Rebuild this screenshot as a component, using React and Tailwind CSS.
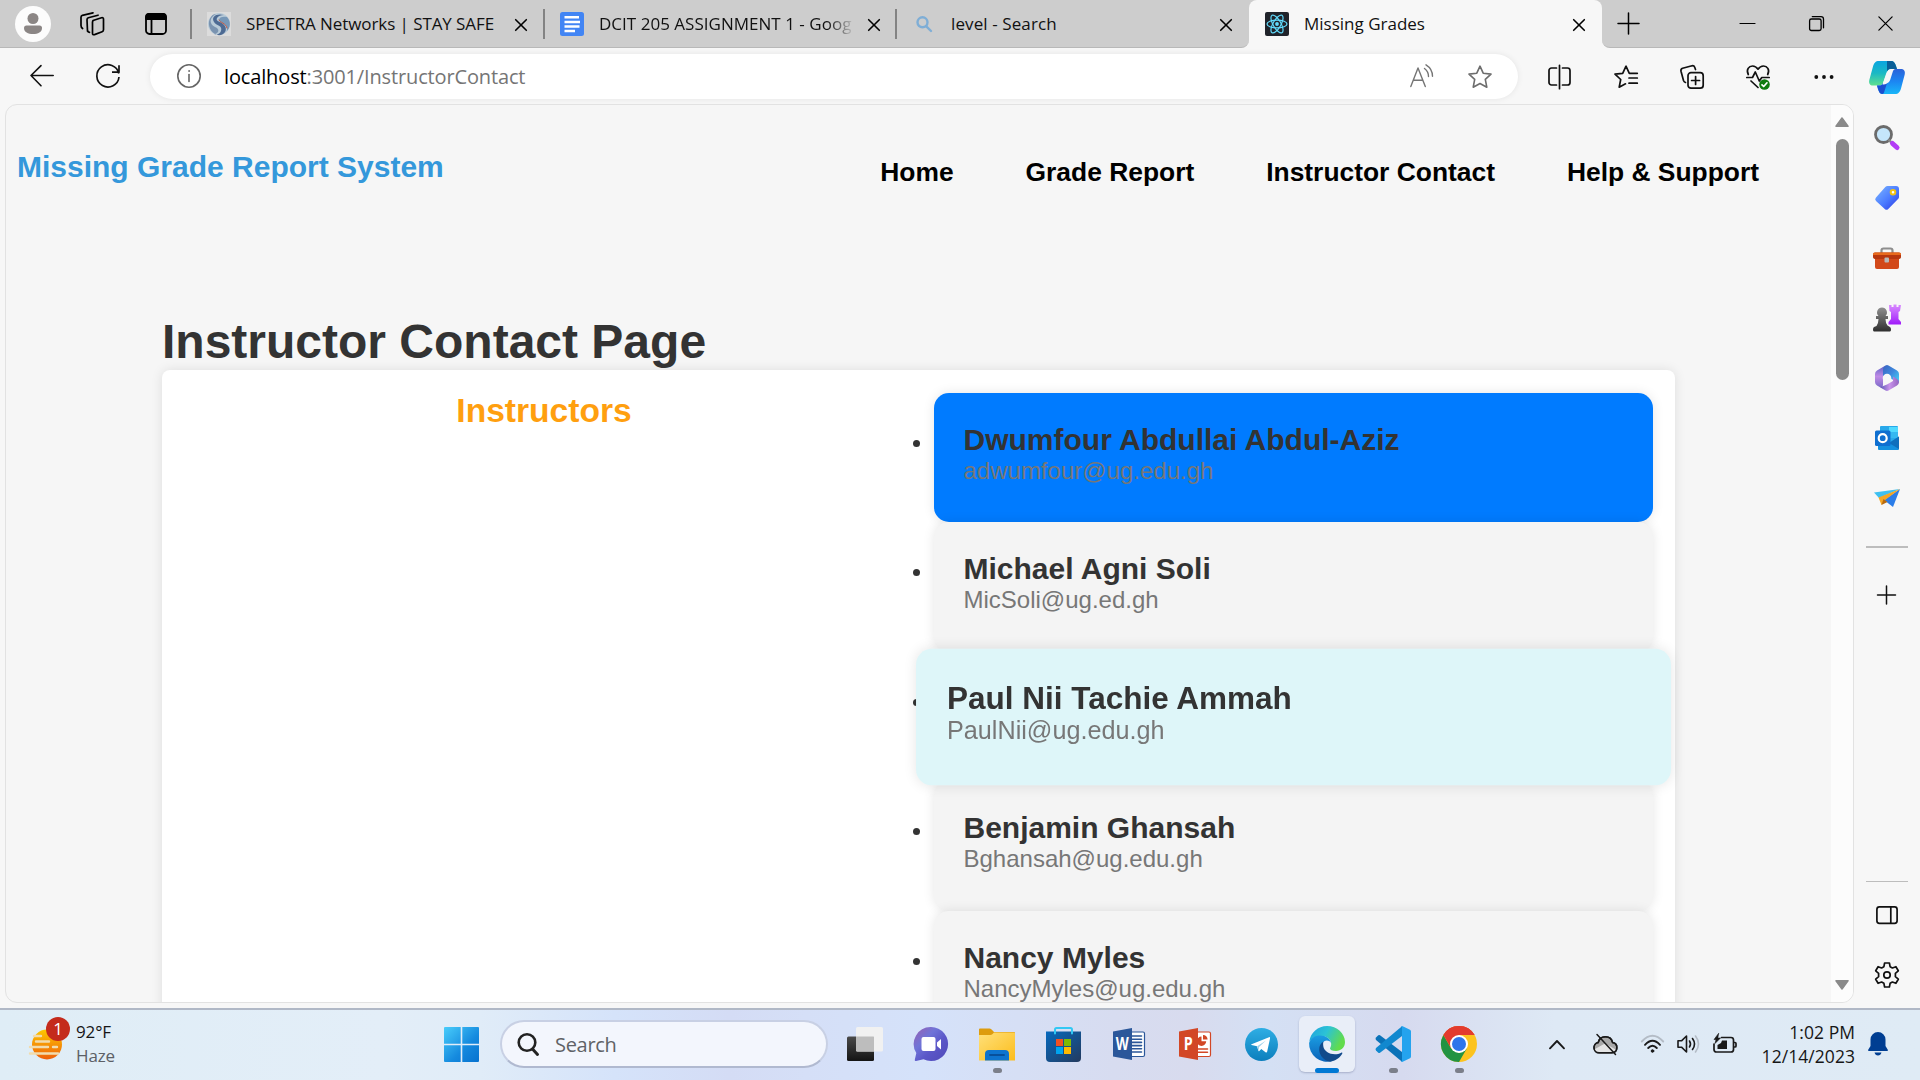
import React from "react";

const segoe = "font-['Open_Sans','Noto_Sans',sans-serif]";
const arial = "font-['Liberation_Sans',Arial,sans-serif]";

function Svg({ w = 24, h = 24, vb, className = "", children, sw = 1.5 }) {
  return (
    <svg
      width={w}
      height={h}
      viewBox={vb || `0 0 ${w} ${h}`}
      fill="none"
      stroke="currentColor"
      strokeWidth={sw}
      strokeLinecap="round"
      strokeLinejoin="round"
      className={"block shrink-0 overflow-visible " + className}
    >
      {children}
    </svg>
  );
}

/* ---------- tab strip ---------- */

function Cross({ size = 12, sw = 1.6, className = "" }) {
  return (
    <Svg w={size} h={size} vb="0 0 12 12" sw={sw} className={className}>
      <path d="M0.7 0.7 11.3 11.3M11.3 0.7 0.7 11.3" />
    </Svg>
  );
}

function SpectraIcon() {
  return (
    <Svg sw={0}>
      <rect width="24" height="24" fill="#dcdcdc" />
      <circle cx="12" cy="12" r="11" fill="#b9cbd8" />
      <path d="M17 3C9 1 4 5 7 10c2 4 9 3 7 9-1 3-4 4-7 3 9 4 14-3 11-8C15 9 8 10 10 6c1-2 4-3 7-3z" fill="#4d6a93" />
      <path d="M9 2C2 6 2 12 8 15c5 2 4 6 0 7-6-3-8-12-4-17 1-2 3-3 5-3z" fill="#7a93b0" />
      <path d="M20 5c-4-1-8 0-8 3 0 3 8 3 8 9 0 1 0 2-1 3 5-4 5-11 1-15z" fill="#7798b8" />
      <path d="M12 8c1 3 7 3 8 8" stroke="#c9583f" strokeWidth="1" />
    </Svg>
  );
}

function DocsIcon() {
  return (
    <Svg sw={0}>
      <rect width="24" height="24" rx="2.5" fill="#4285f4" />
      <path d="M4.5 4h14.500v2.500h-14.500zM4.500 8.700h15.500v2.500h-15.500zM4.500 13.300h15v2.500h-15zM4.500 17.700h10.500v2.500h-10.500z" fill="#fff" />
    </Svg>
  );
}

function ReactIcon() {
  return (
    <Svg sw={1.2}>
      <rect width="24" height="24" rx="2" fill="#20232a" stroke="none" />
      <g stroke="#61dafb">
        <ellipse cx="12" cy="12" rx="10" ry="3.900" />
        <ellipse cx="12" cy="12" rx="10" ry="3.900" transform="rotate(60 12 12)" />
        <ellipse cx="12" cy="12" rx="10" ry="3.900" transform="rotate(120 12 12)" />
      </g>
      <circle cx="12" cy="12" r="1.900" fill="#61dafb" stroke="none" />
    </Svg>
  );
}

function Tab({ icon, title, className, titleClass = "" }) {
  return (
    <div className={"flex h-full items-center " + className}>
      {icon}
      <span className={"min-w-0 flex-1 overflow-hidden text-[17px] leading-6 whitespace-nowrap text-[#111] " + titleClass}>
        {title}
      </span>
      <Cross className="mt-[2px]" />
    </div>
  );
}

const Divider = () => <div className="h-[30px] w-[2px] shrink-0 bg-[#838383]" />;

function TabStrip() {
  return (
    <div className={"flex h-12 shrink-0 bg-[#f7f7f7] text-black " + segoe}>
      <div className="flex w-[1249px] items-center rounded-br-lg border-b border-[#b8b8b8] bg-[#cdcdcd] pl-[15px]">
        <Svg w={36} h={36} sw={0}>
          <circle cx="18" cy="18" r="18" fill="#fcfcfc" />
          <circle cx="18" cy="12.500" r="5.500" fill="#8b8685" />
          <path d="M11.500 19.500h13a2.500 2.500 0 0 1 2.500 2.500c0 4-4 6-9 6s-9-2-9-6a2.500 2.500 0 0 1 2.500-2.500z" fill="#8b8685" />
        </Svg>
        <Svg w={25} h={24} sw={1.7} className="ml-[29px]">
          <path d="M13 8.500 21.500 5.800q2-.5 2 1.500v10.500q0 1.500-1.400 2L14.500 22.600q-2 .6-2-1.400V10q0-1.200 1-1.500z" />
          <path d="M7.500 19.300 7 7.700q0-1.500 1.300-2L18 3.200M9.500 20.300q-2-.2-2-2.300" />
          <path d="M2.600 16.500Q1 15.500 1 13.500V5.200Q1 3.800 2.400 3.300L13 .8" />
        </Svg>
        <Svg w={22} h={22} sw={1.8} className="ml-10">
          <rect x="1" y="1" width="20" height="20" rx="3.500" />
          <path d="M1 6V4a3 3 0 0 1 3-3h14a3 3 0 0 1 3 3v2z" fill="currentColor" />
          <path d="M6.500 6v15" />
        </Svg>
        <div className="ml-[23px]"><Divider /></div>
        <Tab className="w-[351px] pr-4 pl-[15px]" icon={<SpectraIcon />} title="SPECTRA Networks | STAY SAFE" titleClass="ml-[15px] tracking-[-0.08px]" />
        <Divider />
        <Tab
          className="w-[350px] pr-[15px] pl-[15px]"
          icon={<DocsIcon />}
          title="DCIT 205 ASSIGNMENT 1 - Goog"
          titleClass="ml-[15px] mr-[11px] tracking-[0.02px] [mask-image:linear-gradient(to_right,black_228px,transparent_256px)]"
        />
        <Divider />
        <Tab
          className="w-[351px] pr-4 pl-[19px]"
          icon={
            <Svg w={16} h={16} sw={2.4} className="text-[#7faed6]">
              <circle cx="6.500" cy="6.300" r="5" />
              <path d="m10.300 10.300 4.700 4.700" />
            </Svg>
          }
          title="level - Search"
          titleClass="ml-[19px] tracking-[0.1px]"
        />
      </div>
      <div className="w-[353px] bg-[#cdcdcd]">
        <Tab className="rounded-t-lg bg-[#f7f7f7] pr-[17px] pl-4" icon={<ReactIcon />} title="Missing Grades" titleClass="ml-[15px]" />
      </div>
      <div className="flex flex-1 items-center rounded-bl-lg border-b border-[#b8b8b8] bg-[#cdcdcd] pl-4">
        <Svg w={21} h={21}>
          <path d="M10.500 0v21M0 10.500h21" />
        </Svg>
        <Svg w={15} h={15} sw={1.2} className="ml-[101px]">
          <path d="M0 7.500h15" />
        </Svg>
        <Svg w={15} h={15} sw={1.3} className="ml-[54px]">
          <rect x=".6" y="3" width="11.500" height="11.500" rx="1.800" />
          <path d="M3.300 .6h8.700a2.500 2.500 0 0 1 2.500 2.500v8.700" />
        </Svg>
        <Cross size={15} sw={1} className="ml-[54px]" />
      </div>
    </div>
  );
}

/* ---------- toolbar ---------- */

function CopilotIcon() {
  return (
    <Svg w={36} h={33} sw={0}>
      <defs>
        <linearGradient id="cpA" x1="0" y1="0" x2="0" y2="1">
          <stop offset="0" stopColor="#0aa5e0" />
          <stop offset=".5" stopColor="#1bb9c4" />
          <stop offset="1" stopColor="#5fe08f" />
        </linearGradient>
        <linearGradient id="cpB" x1="0" y1="0" x2="0" y2="1">
          <stop offset="0" stopColor="#2b62d9" />
          <stop offset=".5" stopColor="#1c86f2" />
          <stop offset="1" stopColor="#19b6f8" />
        </linearGradient>
      </defs>
      <path d="M10 0h12c3 0 4 2 5 5l1 3h-6c-3 0-4 2-5 5l-3 9c-.7 2-2 2.500-4 2.500H4c-3 0-4.500-2-3.700-5.500L4 5.500C5 2 6.500 0 10 0z" fill="url(#cpA)" />
      <path d="M18 0h4c3 0 4 2 5 5l1 3h-6c-2 0-3 .6-4 2.500z" fill="#0a5f98" />
      <path d="M26 33H14c-3 0-4-2-5-5l-1-3.500h2c2 0 3.300-.5 4-2.500h3c2.500 0 3.500-1 4.300-3.500L24 10c.7-1.800 2-2 4-2h3.500c3.500 0 5 2 4.200 5.500L32 27.500c-1 3.500-2.500 5.500-6 5.500z" fill="url(#cpB)" />
      <path d="M8 24.500h2c2 0 3.300-.5 4-2.500h4l-2.500 8c-.5 1.800-1 3-2 3-2.600 0-3.500-2-4.500-5z" fill="#1b4fd0" />
      <path d="m17.500 13-4 10.500c4 0 5.500-1.500 6.300-4L22.800 9c-3.200-.4-4.400 1.300-5.300 4z" fill="#f7f7f7" />
    </Svg>
  );
}

function Toolbar() {
  return (
    <div className={"flex h-14 shrink-0 items-center bg-[#f7f7f7] pl-[30px] text-[#111] " + segoe}>
      <Svg w={24} h={22} sw={1.600}>
        <path d="M23.200 10.500H1M11 .6 1 10.500 11 20.800" />
      </Svg>
      <Svg sw={1.700} className="ml-[42px]">
        <path d="M22.800 9.500A11.100 11.100 0 1 0 23 13M23 1.200v7h-7" strokeLinecap="butt" />
      </Svg>
      <div className="ml-[30px] flex h-[45px] w-[1368px] items-center rounded-full bg-white pr-[26px] pl-[27px] shadow-[0_0_6px_rgba(0,0,0,0.08)]">
        <Svg className="text-[#666]" sw={1.600}>
          <circle cx="12" cy="12" r="11.200" />
          <path d="M12 10.500v7" />
          <circle cx="12" cy="7" r=".5" fill="currentColor" strokeWidth=".8" />
        </Svg>
        <span className="ml-[23px] flex-1 pt-[2px] text-[20px] leading-6 tracking-[-0.14px] text-[#757575]">
          <span className="text-black">localhost</span>:3001/InstructorContact
        </span>
        <Svg className="text-[#757575]" sw={1.400}>
          <path d="M.8 22.500 8 4l7.300 18.500M3.300 16.300h9.500M14.500 4.500q4 3 4 8M16 .8q6.500 4 6.500 11.500" />
        </Svg>
        <Svg className="mt-px ml-[34px] text-[#6d6d6d]" sw={1.600}>
          <path d="m12 1.200 3.200 7 7.800.9-5.700 5.300 1.500 7.800L12 18.500l-6.800 3.700 1.500-7.800L1 9.100l7.800-.9z" />
        </Svg>
      </div>
      <Svg className="mt-px ml-[30px]" sw={1.700}>
        <path d="M11.500 .3v23.400M8.500 3H3.500A2.500 2.500 0 0 0 1 5.500v12A2.500 2.500 0 0 0 3.500 20h5M14.500 3H19.500a2.500 2.500 0 0 1 2.500 2.500v12a2.500 2.500 0 0 1-2.500 2.500h-5" />
      </Svg>
      <Svg className="mt-px ml-[42px]" sw={1.700}>
        <path d="M16 8.300h-.7L12 1.200 8.700 8.300 1 9.200l5.700 5.300-1.500 7.700 6.300-3.400M16 8.300h7.300M15 13h8.300M15 18.200h8.300" />
      </Svg>
      <Svg className="mt-px ml-[42px]" sw={1.700}>
        <rect x="8" y="7.700" width="15.200" height="15.500" rx="3" />
        <path d="M15.600 11.500v8M11.600 15.500h8M5.500 17.500q-1.500-.5-2-2L1 6.300Q.5 4 2.600 3.300L12 .8q2-.4 2.700 1.500l.8 2.200" />
      </Svg>
      <Svg className="mt-px ml-[42px]" sw={1.700}>
        <path d="M2.300 9.500C-.2 4.500 3 1 6.500 1 9 1 10.700 2.300 12 4.200 13.300 2.300 15 1 17.500 1 21 1 24.200 4.500 21.700 9.500M.8 12.500h5.700L9.300 7l4 9 2.500-3.500h7.400M5 16l7 6.500" />
        <circle cx="18.500" cy="19.500" r="5.300" fill="#107c10" stroke="none" />
        <path d="m16 19.800 1.700 1.700 3.300-3.700" stroke="#fff" />
      </Svg>
      <Svg className="mt-px ml-[42px]" sw={0}>
        <g fill="#111">
          <circle cx="4.300" cy="12" r="1.900" />
          <circle cx="12" cy="12" r="1.900" />
          <circle cx="19.600" cy="12" r="1.900" />
        </g>
      </Svg>
      <div className="mt-[2px] ml-[33px]"><CopilotIcon /></div>
    </div>
  );
}

/* ---------- web page ---------- */

const instructors = [
  { name: "Dwumfour Abdullai Abdul-Aziz", email: "adwumfour@ug.edu.gh", look: "bg-[#007bff]" },
  { name: "Michael Agni Soli", email: "MicSoli@ug.ed.gh", look: "bg-[#f4f4f4]" },
  { name: "Paul Nii Tachie Ammah", email: "PaulNii@ug.edu.gh", look: "z-10 scale-105 bg-[#def6f9]" },
  { name: "Benjamin Ghansah", email: "Bghansah@ug.edu.gh", look: "bg-[#f4f4f4]" },
  { name: "Nancy Myles", email: "NancyMyles@ug.edu.gh", look: "bg-[#f4f4f4]" },
];

function WebPage() {
  return (
    <div className={"min-w-0 flex-1 overflow-hidden " + arial}>
      <div className="flex h-[188px] items-start justify-between pr-[72px] pl-[11px] font-bold">
        <div className="mt-[45px] text-[30px] leading-[34px] text-[#3498db]">Missing Grade Report System</div>
        <nav className="mt-[52px] flex gap-[72px] text-[26.400px] leading-[30px] text-black">
          <span>Home</span>
          <span>Grade Report</span>
          <span>Instructor Contact</span>
          <span>Help &amp; Support</span>
        </nav>
      </div>
      <h1 className="mt-[21px] ml-[156px] h-14 text-[48px] leading-[55px] font-bold text-[#333]">Instructor Contact Page</h1>
      <div className="ml-[156px] flex h-[900px] w-[1513px] items-start rounded-lg bg-white pt-[22.800px] shadow-[0_0_12px_rgba(0,0,0,0.1)]">
        <h2 className="w-[764px] text-center text-[33.600px] leading-9 font-bold text-[#ff9f0f]">Instructors</h2>
        <ul className="ml-2 w-[719px]">
          {instructors.map((p) => (
            <li key={p.name} className="relative">
              <span className="absolute top-[47px] -left-[21px] size-[7px] rounded-full bg-[#333]" />
              <div className={"relative h-[129.500px] rounded-[15px] px-[29.500px] pt-[30px] shadow-[0_0_12px_rgba(0,0,0,0.1)] " + p.look}>
                <h3 className="text-[30px] leading-[34px] font-bold text-[#333]">{p.name}</h3>
                <p className="text-[24px] leading-7 text-[#777]">{p.email}</p>
              </div>
            </li>
          ))}
        </ul>
      </div>
    </div>
  );
}

function ScrollBar() {
  return (
    <div className="flex w-[22px] shrink-0 flex-col items-center bg-[#fcfcfc] pt-3 pb-3">
      <Svg w={14} h={10} sw={1.500} className="text-[#8a8a8a]">
        <path d="M7 1 13 9.300H1z" fill="currentColor" />
      </Svg>
      <div className="mt-3 h-[241px] w-[13px] rounded-full bg-[#8a8a8a]" />
      <Svg w={14} h={10} sw={1.500} className="mt-auto text-[#8a8a8a]">
        <path d="M7 9 13 .7H1z" fill="currentColor" />
      </Svg>
    </div>
  );
}

/* ---------- edge sidebar ---------- */

function SideIcons() {
  return [
    <Svg w={26} h={26} sw={0} key="search">
      <circle cx="9.500" cy="9.500" r="8" fill="#c5e6fb" stroke="#6b6b6b" strokeWidth="2.800" />
      <path d="M15.300 15.300 18 18" stroke="#8a8a8a" strokeWidth="2.500" />
      <path d="m18.500 18.500 4.500 4" stroke="#b23cf5" strokeWidth="5" />
    </Svg>,
    <Svg w={24} h={24} sw={0} key="tag">
      <defs>
        <linearGradient id="tg" x1="0" y1="0" x2="1" y2="1">
          <stop offset="0" stopColor="#7db8ff" />
          <stop offset=".55" stopColor="#4b7bff" />
          <stop offset="1" stopColor="#2a35e0" />
        </linearGradient>
      </defs>
      <path d="M12.500 0H21a3 3 0 0 1 3 3v8q0 1-.7 1.800L13 23.200q-1.500 1.300-3 0L1 15q-1.700-1.800 0-3.600L10.300 1q1-1 2.200-1z" fill="url(#tg)" />
      <circle cx="18" cy="6.300" r="2.300" fill="#fff" stroke="#f5c211" strokeWidth="2" />
    </Svg>,
    <Svg w={28} h={22} sw={0} key="case">
      <path d="M8.500 6V3.500q0-2 2-2h7q2 0 2 2V6" stroke="#8e8e8e" strokeWidth="2.200" />
      <rect x="2" y="8" width="24" height="14" rx="2" fill="#d2491a" />
      <path d="M2 5.500h24q2 0 2 2V10q0 2-3 2H3q-3 0-3-2V7.500q0-2 2-2z" fill="#b7370f" />
      <path d="M2 5.500h24q2 0 2 2V8H0v-.5q0-2 2-2z" fill="#e86a1c" />
      <rect x="11.500" y="10.500" width="4.500" height="5" rx="1" fill="#b8b8b8" />
    </Svg>,
    <Svg w={28} h={28} sw={0} key="chess">
      <defs>
        <linearGradient id="pw" x1="0" y1="0" x2="0" y2="1">
          <stop offset="0" stopColor="#8f8f8f" />
          <stop offset="1" stopColor="#2e2e2e" />
        </linearGradient>
        <linearGradient id="rk" x1="0" y1="0" x2="0" y2="1">
          <stop offset="0" stopColor="#d98cff" />
          <stop offset="1" stopColor="#a01bfa" />
        </linearGradient>
      </defs>
      <path d="M16 1h2.500v2h2V.5h3V3h2V1H28l-1 6-1.500 1v7l2.500 3v2.500H15.500V18l2.500-3V8l-1.500-1z" fill="url(#rk)" />
      <path d="M9 3.500a5 5 0 0 1 3.500 8.500H15v3h-2.500q0 4 2 6.500l2.500 1.500q1 .5 1 2.500 0 2-1 2H1q-1 0-1-2t1-2.500L3.500 22q2-3 2-7H3v-3h2.500A5 5 0 0 1 9 3.500z" fill="url(#pw)" />
    </Svg>,
    <Svg w={24} h={26} sw={0} key="m365">
      <defs>
        <linearGradient id="m3a" x1="0" y1="0" x2="0" y2="1">
          <stop offset="0" stopColor="#5b62c4" />
          <stop offset=".5" stopColor="#c08be6" />
          <stop offset="1" stopColor="#7c6bc8" />
        </linearGradient>
        <linearGradient id="m3b" x1="0" y1="0" x2="1" y2="1">
          <stop offset="0" stopColor="#3b63c0" />
          <stop offset=".5" stopColor="#3e8ade" />
          <stop offset="1" stopColor="#45d6f6" />
        </linearGradient>
        <linearGradient id="m3c" x1="0" y1="0" x2="1" y2="0">
          <stop offset="0" stopColor="#5a56b4" />
          <stop offset=".5" stopColor="#c893ea" />
          <stop offset="1" stopColor="#9463c0" />
        </linearGradient>
      </defs>
      <path d="M10.500.5 2 5.500Q0 6.700 0 9v8q0 2.300 2 3.500l3 1.700q3 .8 3-2.200V7z" fill="url(#m3a)" />
      <path d="M10.500.5q1.500-.9 3 0l8.500 5q2 1.200 2 3.500v9L16.500 14 13 9 8 11.500V5.500Q8 2 10.500.5z" fill="url(#m3b)" />
      <path d="M5 22.200l5.500 3.300q1.500.8 3 0l8.500-5q2-1.200 2-3.500 0-2-2-3l-4-2.500v4.500L12 19.500z" fill="url(#m3c)" />
      <circle cx="12" cy="13" r="4.300" fill="#f7f7f7" />
    </Svg>,
    <Svg w={24} h={24} sw={0} key="outlook">
      <rect x="5" width="18" height="16" rx="1" fill="#28a8ea" />
      <path d="M14 1h9v5h-9z" fill="#50d9ff" />
      <path d="M14 6h9v6h-9z" fill="#35b8f1" />
      <path d="M3 12 14 17 24 10.500V23q0 1-1 1H4q-1 0-1-1z" fill="#1490df" />
      <path d="M24 10.500 14 17l10 6z" fill="#0f6fbd" />
      <rect y="4.500" width="15.500" height="15.500" rx="1.500" fill="#0f6fd0" />
      <circle cx="7.700" cy="12.200" r="4" stroke="#fff" strokeWidth="2.200" />
    </Svg>,
    <Svg w={26} h={18} sw={0} key="plane">
      <path d="M0 3.500 26 0 5 9z" fill="#3fc0f0" />
      <path d="M26 0 10 11l9 7z" fill="#2b7de9" />
      <path d="M26 0 4.500 8.500 7.500 16 11 11z" fill="#f5a623" />
      <path d="M7.500 16 9.500 10l4 3z" fill="#b86b10" />
    </Svg>,
  ];
}

function SideBar() {
  return (
    <div className="flex w-[66px] shrink-0 flex-col items-center pt-1 text-[#111]">
      {SideIcons().map((icon) => (
        <div key={icon.key} className="flex h-[60px] items-center justify-center">{icon}</div>
      ))}
      <div className="mt-[18px] h-[2px] w-[42px] bg-[#bdbdbd]" />
      <Svg w={18} h={18} className="mt-[38px]">
        <path d="M8.500 0v18M-.5 9h18" />
      </Svg>
      <div className="mt-auto h-px w-[42px] bg-[#bdbdbd]" />
      <Svg w={22} h={18} sw={1.700} className="mt-6">
        <rect x=".9" y=".9" width="20.200" height="16.400" rx="2.500" />
        <path d="M14.800 1v16" />
      </Svg>
      <Svg w={24} h={26} sw={1.700} className="mt-[38px] mb-5">
        <path d="M9.600 1h4.800l.7 3.700 2.300 1.300 3.500-1.300 2.400 4.100-2.900 2.500v3.400l2.900 2.500-2.400 4.100-3.500-1.300-2.300 1.300-.7 3.700H9.600l-.7-3.700L6.600 20l-3.500 1.300L.7 17.200l2.900-2.500v-3.400L.7 8.800l2.400-4.100L6.600 6l2.300-1.300z" />
        <circle cx="12" cy="13" r="3.200" />
      </Svg>
    </div>
  );
}

/* ---------- taskbar ---------- */

function WeatherIcon() {
  return (
    <div className="relative h-[31px] w-[33px] shrink-0">
      <Svg w={33} h={31} sw={0}>
        <defs>
          <linearGradient id="sun" x1="0" y1="0" x2="0" y2="1">
            <stop offset="0" stopColor="#fdc800" />
            <stop offset="1" stopColor="#ee5f0a" />
          </linearGradient>
        </defs>
        <circle cx="18" cy="15.500" r="15" fill="url(#sun)" />
        <g stroke="#f1dcae" strokeWidth="2.400">
          <path d="M5 7h7M7 12.500h13M1 18h18M24 18h4M1 24.500h28" />
        </g>
      </Svg>
      <span className="absolute -top-[12px] left-[17px] flex size-6 items-center justify-center rounded-full bg-[#c42b1c] text-[17px] leading-none text-white">1</span>
    </div>
  );
}

function OfficeIcon({ letter, color, dark, children }) {
  return (
    <Svg w={32} h={32} sw={0}>
      <rect x="16" y="4" width="15.500" height="24.500" rx="1.500" fill="#fff" stroke={color} strokeWidth="1.200" />
      {children}
      <path d="M0 3.500 19 0v32L0 28.500z" fill={dark} />
      <text x="9.300" y="22.300" textAnchor="middle" fontSize="17" fontWeight="700" fill="#fff" fontFamily="Open Sans" textLength={letter === "W" ? 13 : 9} lengthAdjust="spacingAndGlyphs">{letter}</text>
    </Svg>
  );
}

const apps = [
  {
    id: "taskview",
    icon: (
      <Svg w={36} h={34} sw={0}>
        <defs>
          <linearGradient id="tvd" x1="0" y1="0" x2="0" y2="1"><stop offset="0" stopColor="#4a4a4a" /><stop offset="1" stopColor="#141414" /></linearGradient>
        </defs>
        <rect y="9.500" width="27" height="24.500" rx="1.500" fill="url(#tvd)" />
        <rect x="9" y="0" width="27" height="24.500" rx="1.500" fill="#f1f1f1" />
        <path d="M9 9.500h17.500a.5.500 0 0 1 .5.500v14.500H10.500A1.500 1.500 0 0 1 9 23z" fill="#bdbdbd" />
      </Svg>
    ),
  },
  {
    id: "chat",
    icon: (
      <Svg w={34} h={34} sw={0}>
        <defs>
          <linearGradient id="ch" x1="0" y1="0" x2="1" y2="1"><stop offset="0" stopColor="#9a5fb0" /><stop offset=".35" stopColor="#6f74d8" /><stop offset=".6" stopColor="#5b57c8" /><stop offset="1" stopColor="#4f49b8" /></linearGradient>
        </defs>
        <path d="M17 0a17 17 0 1 1-7.500 32.200L2 34q-1.500.2-1.200-1.300L2.300 26A17 17 0 0 1 17 0z" fill="url(#ch)" />
        <rect x="7.500" y="10" width="14" height="14" rx="2" fill="#fff" />
        <path d="m23 15.500 4-3.500v10.500l-4-3.500z" fill="#fff" />
      </Svg>
    ),
  },
  {
    id: "explorer",
    dot: true,
    icon: (
      <Svg w={36} h={33} sw={0}>
        <defs>
          <linearGradient id="ex" x1="0" y1="0" x2="1" y2="1"><stop offset="0" stopColor="#ffe07a" /><stop offset="1" stopColor="#fcbd1c" /></linearGradient>
        </defs>
        <path d="M0 1.500Q0 .5 1 .5h9.500q1 0 1.800.7L15 4h20q1 0 1 1v8H0z" fill="#dd9c0e" />
        <path d="M0 7h11.500q1 0 1.800-.7L15 4.500h20q1 0 1 1V32.500H0z" fill="url(#ex)" />
        <path d="M6 32.500V26q0-4 4-4h16q4 0 4 4v6.500z" fill="#0e74cf" />
        <path d="M11 27h14" stroke="#08509b" strokeWidth="1.800" />
      </Svg>
    ),
  },
  {
    id: "store",
    icon: (
      <Svg w={35} h={35} sw={0}>
        <defs>
          <linearGradient id="st" x1="0" y1="0" x2="1" y2="1"><stop offset="0" stopColor="#0669bd" /><stop offset="1" stopColor="#243a5e" /></linearGradient>
        </defs>
        <path d="M0 4.500h35V31q0 4-4 4H4q-4 0-4-4z" fill="url(#st)" />
        <path d="M9 6.500V2.500Q9 1 10.500 1h14Q26 1 26 2.500V6.500" stroke="#32c8f4" strokeWidth="2" />
        <path d="M10 12h7v7h-7z" fill="#f25022" /><path d="M18 12h7v7h-7z" fill="#7fba00" />
        <path d="M10 20h7v7h-7z" fill="#00a4ef" /><path d="M18 20h7v7h-7z" fill="#ffb900" />
      </Svg>
    ),
  },
  {
    id: "word",
    icon: (
      <OfficeIcon letter="W" color="#2b579a" dark="#2b579a">
        <path d="M19 8h9.500M19 11.200h9.500M19 14.400h9.500M19 17.600h9.500M19 20.800h9.500M19 24h9.500" stroke="#2b579a" strokeWidth="1.600" />
      </OfficeIcon>
    ),
  },
  {
    id: "powerpoint",
    icon: (
      <OfficeIcon letter="P" color="#d24726" dark="#d24726">
        <path d="M22.500 8.500a4.700 4.700 0 1 0 4.700 4.700h-4.700zM24 7v4.600h4.600A4.600 4.600 0 0 0 24 7z" fill="#d24726" />
        <path d="M19 21h9.500M19 24.300h9.500" stroke="#d24726" strokeWidth="1.600" />
      </OfficeIcon>
    ),
  },
  {
    id: "telegram",
    icon: (
      <Svg w={33} h={33} sw={0}>
        <defs>
          <linearGradient id="tl" x1="0" y1="0" x2="0" y2="1"><stop offset="0" stopColor="#2faee4" /><stop offset="1" stopColor="#0c7fbd" /></linearGradient>
        </defs>
        <circle cx="16.500" cy="16.500" r="16.500" fill="url(#tl)" />
        <path d="M6.500 16.300 24 9.200q1.300-.4 1 1.200l-2.800 13.200q-.4 1.400-1.700.6L16.300 21l-2 2q-.8.700-1-.4L12 18.300l-5.500-1.300q-.8-.3 0-.7z" fill="#fff" />
        <path d="m12.200 18.200 8.800-5.600-7 6.400-.4 3.700z" fill="#9cd0ea" />
      </Svg>
    ),
  },
  {
    id: "edge",
    active: true,
    icon: (
      <Svg w={36} h={36} sw={0}>
        <defs>
          <linearGradient id="eg" x1="0" y1="0" x2="1" y2=".4"><stop offset="0" stopColor="#1e9fe0" /><stop offset=".5" stopColor="#2cc3d5" /><stop offset="1" stopColor="#62dc4c" /></linearGradient>
          <linearGradient id="eb" x1="0" y1="0" x2="0" y2="1"><stop offset="0" stopColor="#1b9de2" /><stop offset="1" stopColor="#0b62b8" /></linearGradient>
        </defs>
        <path d="M.3 15.500C1.500 6.500 9 0 18 0c10 0 18 7.500 18 16 0 5.500-4 9-9 9-4 0-6-1.500-6-2.500 0-.8 1.200-1.500 1.200-4.500 0-4.500-4.500-8-10-8C7 10 3 12 .3 15.500z" fill="url(#eg)" />
        <path d="M.1 17C1.500 12 6 9.500 11 9.500c6 0 10.500 3.500 11 7.500-1-1.800-2.600-2.500-4.200-2.500-3 0-5.500 3-5.500 7.500 0 6.500 5 12.500 11 13A18 18 0 0 1 .1 17z" fill="url(#eb)" />
        <path d="M14.500 15.600C12 17 10 20 10.200 24c.3 6 5.500 11 11 11.700 5-1 9.500-3.500 12-8 .4-.8-.2-1.400-1-1-2 1-4 1.500-6.200 1.500-6 0-11-3.500-11.700-8-.2-1.800-.3-3 .2-4.600z" fill="#114a8b" />
      </Svg>
    ),
  },
  {
    id: "vscode",
    dot: true,
    icon: (
      <Svg w={36} h={36} sw={0}>
        <path d="M1 11.500 3.300 9.300q.8-.6 1.700 0L27 26v9.700L1 14q-1-1.200 0-2.500z" fill="#0a72b8" />
        <path d="M1 24.500 3.300 26.700q.8.600 1.700 0L27 10V.3L1 22q-1 1.200 0 2.500z" fill="#1188cf" />
        <path d="M26 .2q.8-.4 1.700 0l7.300 3.500q1 .5 1 1.700v25.200q0 1.200-1 1.700l-7.300 3.500q-.9.400-1.700 0 1 0 1-1.700V2q0-1.600-1-1.800z" fill="#24a3ee" />
      </Svg>
    ),
  },
  {
    id: "chrome",
    dot: true,
    icon: (
      <Svg w={36} h={36} sw={0}>
        <circle cx="18" cy="18" r="18" fill="#fcc31e" />
        <path d="M18 18 2.400 9A18 18 0 0 1 33.600 9H18z" fill="#e33b2e" />
        <path d="M2.400 9A18 18 0 0 0 18 36l7.800-13.500L18 27l-7.800-4.500z" fill="#229342" />
        <path d="M18 9h15.600A18 18 0 0 0 2.400 9l7.800 13.500z" fill="#e33b2e" />
        <circle cx="18" cy="18" r="9" fill="#fff" />
        <circle cx="18" cy="18" r="7" fill="#2f75ea" />
      </Svg>
    ),
  },
];

function Taskbar() {
  return (
    <div
      className={
        "flex h-[72px] shrink-0 items-center border-t-2 border-[#b0b8c6] bg-[linear-gradient(to_right,#dfedf6_0%,#e3eef8_20%,#e0ecf8_25%,#d5e3fa_32%,#d4dcf5_38%,#d5dff7_42%,#d5e2fa_48%,#d7dcf0_58%,#d8dbee_62%,#d4e0f4_66%,#d6daef_73%,#dee9f5_81%,#dfebf5_100%)] pb-[2px] pl-[29px] " +
        segoe
      }
    >
      <WeatherIcon />
      <div className="ml-[14px] w-[368px] text-[17px] leading-6 tracking-[-0.15px] text-[#161616]">
        <div>92°F</div>
        <div className="text-[#5c6066]">Haze</div>
      </div>
      <Svg w={35} h={35} sw={0}>
        <defs>
          <linearGradient id="win" gradientUnits="userSpaceOnUse" x1="0" y1="0" x2="35" y2="35"><stop offset="0" stopColor="#49cdfb" /><stop offset=".6" stopColor="#1489de" /><stop offset="1" stopColor="#0672cf" /></linearGradient>
        </defs>
        <path d="M1 0h15.700v16.700H0V1Q0 0 1 0zM18.300 0H34q1 0 1 1v15.700H18.300zM0 18.300h16.700V35H1q-1 0-1-1zM18.300 18.300H35V34q0 1-1 1H18.300z" fill="url(#win)" />
      </Svg>
      <div className="ml-[21px] flex h-12 w-[328px] items-center rounded-full border-2 border-[#c8d0e4] border-b-[#b0b9d0] bg-[#f3f6fd] pl-[15px]">
        <Svg w={22} h={23} sw={2.600} className="text-[#222]">
          <circle cx="10" cy="9.500" r="8.300" />
          <path d="m15.500 16 5 5.500" strokeWidth="3" />
        </Svg>
        <span className="ml-4 pt-[2px] text-[20px] leading-6 tracking-[-0.3px] text-[#5f6266]">Search</span>
      </div>
      <div className="ml-1 flex h-[70px]">
        {apps.map((a) => (
          <div key={a.id} className="relative flex h-full w-[66px] items-center justify-center">
            <div className={"flex size-14 items-center justify-center rounded-md " + (a.active ? "bg-[#e9eef8] shadow-[0_1px_2px_rgba(60,70,110,0.3)]" : "")}>{a.icon}</div>
            {a.active && <div className="absolute bottom-[6px] h-[5px] w-6 rounded-full bg-[#0078d4]" />}
            {a.dot && <div className="absolute bottom-[6px] h-[5px] w-[9px] rounded-full bg-[#7b7f8a]" />}
          </div>
        ))}
      </div>
      <Svg w={16} h={9} sw={1.900} className="ml-[57px] text-[#1a1a1a]">
        <path d="m1 8.300 7-7.300 7 7.300" />
      </Svg>
      <Svg w={25} h={20} className="ml-7 text-[#1a1a1a]">
        <path d="M6 18.800a5.200 5.200 0 0 1-.8-10.300 7.400 7.400 0 0 1 14.400 0A5.200 5.200 0 0 1 19 18.800z" fill="#a9a9a9" />
        <path d="M6 18.800q-3.800-.5-4.500-3.500L12 9.500l11.500 6.500q-1.300 2.600-4.500 2.800z" fill="#e4e4e4" stroke="none" />
        <path d="M6 18.800a5.200 5.200 0 0 1-.8-10.300 7.400 7.400 0 0 1 14.400 0A5.200 5.200 0 0 1 19 18.800z" />
        <path d="m4 .5 18.500 20" />
      </Svg>
      <Svg w={23} h={18} sw={1.900} className="ml-[23px] text-[#1a1a1a]">
        <path d="M.8 6.500q10.700-11.500 21.400 0" stroke="#b4bcc6" />
        <path d="M4 9.800q7.500-8 15 0M7.200 13q4.300-4.500 8.600 0" />
        <circle cx="11.500" cy="16" r="1.300" fill="currentColor" strokeWidth="1" />
      </Svg>
      <Svg w={23} h={20} sw={1.600} className="ml-[13px] text-[#1a1a1a]">
        <path d="M1 6.800h3.500L9.500 2v16l-5-4.800H1z" />
        <path d="M12.500 7q2 3 0 6M15.500 4.500q4 5.500 0 11" />
        <path d="M18.500 2q6 8 0 16" stroke="#b4bcc6" />
      </Svg>
      <Svg w={24} h={20} sw={1.700} className="ml-[13px] text-[#1a1a1a]">
        <path d="M8.500 3.500H18q2.500 0 2.500 2.500v9.500q0 2.500-2.500 2.500H3.500Q1 18 1 15.500V10M21 8.500h1q1 0 1 1V12q0 1-1 1h-1" />
        <path d="M9 6.500h5v8.500H4.500V11L8 9z" fill="currentColor" stroke="none" />
        <path d="M5.500-.5 1 5.500h2L2 9.500l5.500-5.500H5z" fill="currentColor" strokeWidth=".6" />
      </Svg>
      <div className="w-[118px] text-right text-[17.500px] leading-6 tracking-[0.05px] whitespace-nowrap text-[#161616]">
        <div>1:02 PM</div>
        <div>12/14/2023</div>
      </div>
      <Svg w={20} h={24} sw={0} className="ml-[13px]">
        <path d="M10 0a7.500 7.500 0 0 1 7.500 7.500V14l2.300 3.700q.6 1.300-.8 1.300H1q-1.400 0-.8-1.300L2.500 14V7.500A7.500 7.500 0 0 1 10 0zM6.500 20.500h7q-.8 3-3.500 3t-3.500-3z" fill="#003e92" />
      </Svg>
    </div>
  );
}

export default function App() {
  return (
    <div className="flex h-[1080px] w-[1920px] flex-col overflow-hidden bg-[#f7f7f7]">
      <TabStrip />
      <Toolbar />
      <div className="flex min-h-0 flex-1">
        <div className="mb-[5px] ml-[5px] flex w-[1849px] overflow-hidden rounded-xl border border-[#e2e2e2] bg-[#f6f6f6]">
          <WebPage />
          <ScrollBar />
        </div>
        <SideBar />
      </div>
      <Taskbar />
    </div>
  );
}
